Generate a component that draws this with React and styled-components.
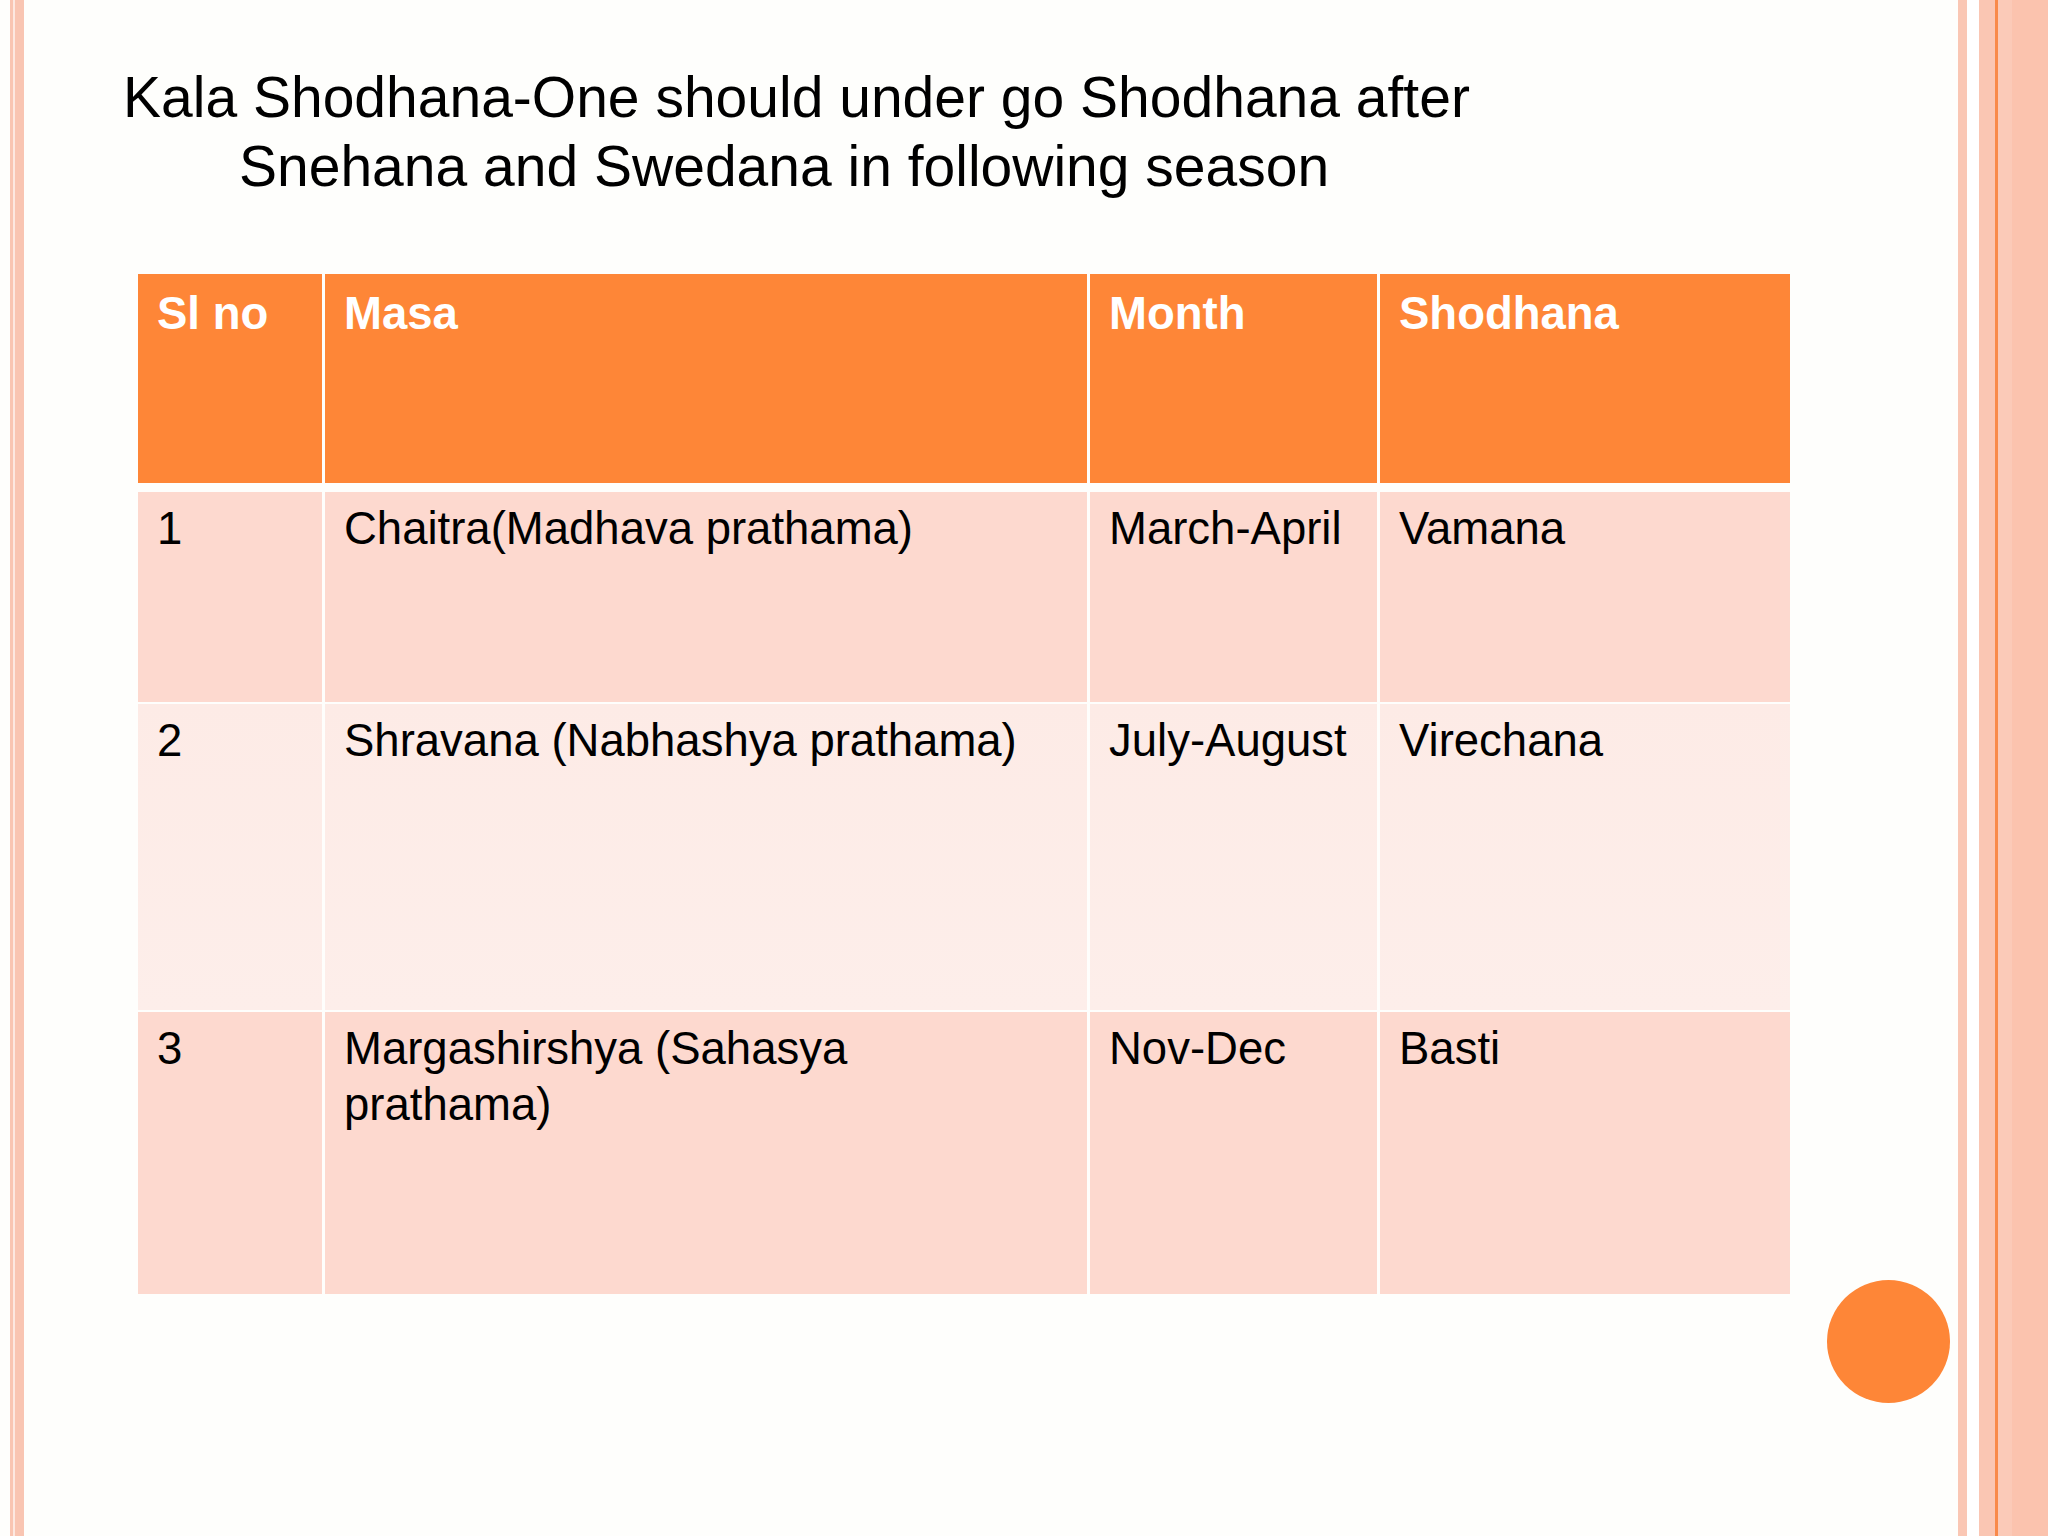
import React from 'react';
import styled, { createGlobalStyle } from 'styled-components';

const GlobalStyle = createGlobalStyle`
  html, body {
    margin: 0;
    padding: 0;
    background: #fefefc;
  }
  body {
    font-family: "Liberation Sans", Arial, sans-serif;
  }
`;

const Frame = styled.div`
  display: flex;
  width: 2048px;
  height: 1536px;
  overflow: hidden;
  background: #fefefc;
`;

const LeftEdge = styled.div`
  flex: 0 0 24px;
  background: linear-gradient(to right,
    #fefefc 0 10px,
    #f9c5b2 10px 13px,
    #fde8e0 13px 15px,
    #f9c5b2 15px 24px);
`;

const RightEdge = styled.div`
  flex: 0 0 90px;
  background: linear-gradient(to right,
    #fac7b4 0 9px,
    #ffffff 9px 21px,
    #fac6b3 21px 37px,
    #f98a4a 37px 40px,
    #fbcab8 40px 54px,
    #fbc3ae 54px 90px);
`;

const Main = styled.main`
  position: relative;
  flex: 1;
  padding: 63px 0 0 99px;
`;

const Title = styled.h1`
  margin: 0;
  width: 1300px;
  padding-left: 116px;
  text-indent: -116px;
  font-size: 57px;
  line-height: 69px;
  font-weight: normal;
  color: #000;
`;

const Table = styled.div`
  display: flex;
  flex-direction: column;
  margin: 73px 0 0 15px;
  width: max-content;
`;

const Row = styled.div`
  display: grid;
  grid-template-columns: 184px 762px 287px 410px;
  column-gap: 3px;
  height: ${p => p.h}px;
  margin-top: ${p => p.gap}px;
`;

const Cell = styled.div`
  padding: ${p => (p.head ? 12 : 9)}px 14px 0 19px;
  font-size: 45.5px;
  line-height: 56px;
  white-space: pre-line;
  color: ${p => (p.head ? '#ffffff' : '#000000')};
  font-weight: ${p => (p.head ? 'bold' : 'normal')};
  background: ${p => p.bg};
`;

const Dot = styled.div`
  position: absolute;
  left: 1803px;
  top: 1280px;
  width: 123px;
  height: 123px;
  border-radius: 50%;
  background: #fe8637;
`;

const header = ['Sl no', 'Masa', 'Month', 'Shodhana'];

const rows = [
  { h: 210, gap: 9, bg: '#fdd9cf', cells: ['1', 'Chaitra(Madhava prathama)', 'March-April', 'Vamana'] },
  { h: 306, gap: 2, bg: 'linear-gradient(to bottom, #fdebe6, #fdeeea)', cells: ['2', 'Shravana (Nabhashya prathama)', 'July-August', 'Virechana'] },
  { h: 282, gap: 2, bg: '#fdd9cf', cells: ['3', 'Margashirshya (Sahasya\nprathama)', 'Nov-Dec', 'Basti'] },
];

const App = () => {
  return (
    <Frame>
      <GlobalStyle />
      <LeftEdge />
      <Main>
        <Title>Kala Shodhana-One should under go Shodhana after Snehana and Swedana in following season</Title>
        <Table>
          <Row h={209} gap={0}>
            {header.map(h => (
              <Cell key={h} head bg="#fe8637">{h}</Cell>
            ))}
          </Row>
          {rows.map((row, i) => (
            <Row key={i} h={row.h} gap={row.gap}>
              {row.cells.map((c, j) => (
                <Cell key={j} bg={row.bg}>{c}</Cell>
              ))}
            </Row>
          ))}
        </Table>
        <Dot />
      </Main>
      <RightEdge />
    </Frame>
  );
};

export default App;
